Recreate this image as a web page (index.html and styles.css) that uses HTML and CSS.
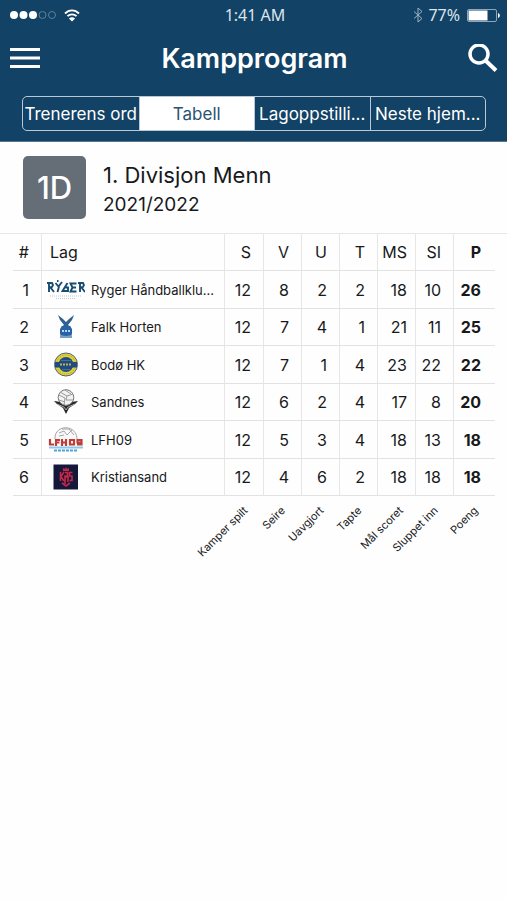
FILE: index.html
```html
<!DOCTYPE html>
<html lang="no">
<head>
<meta charset="utf-8">
<meta name="viewport" content="width=device-width, initial-scale=1">
<title>Kampprogram</title>
<link rel="stylesheet" href="styles.css">
</head>
<body>
<header class="top">
  <div class="status">
    <div class="status-side">
      <svg width="46" height="10" viewBox="0 0 46 10" aria-hidden="true"><g fill="#fff"><circle cx="4" cy="5" r="4"/><circle cx="13.500" cy="5" r="4"/><circle cx="23" cy="5" r="4"/></g><g fill="none" stroke="#5f8099"><circle cx="32.500" cy="5" r="3.500"/><circle cx="42" cy="5" r="3.500"/></g></svg>
      <svg class="wifi" width="16" height="13" viewBox="0 0 16 13" aria-hidden="true"><path d="M1 4.500C5 .4 11 .4 15 4.500M3.400 7.200C6 4.700 10 4.700 12.600 7.200" fill="none" stroke="#fff" stroke-width="1.800"/><path d="M4.900 9.500C6.700 7.900 9.300 7.900 11.100 9.500L8 12.500Z" fill="#fff"/></svg>
    </div>
    <span>1:41 AM</span>
    <div class="status-side status-right">
      <svg width="10" height="16" viewBox="0 0 10 16" aria-hidden="true"><path d="M1 4.500 9 11.500 5 15V1L9 4.500 1 11.500" fill="none" stroke="#9bb0c1"/></svg>
      <span>77%</span>
      <svg class="battery" width="33" height="13" viewBox="0 0 33 13" aria-hidden="true"><rect x=".5" y=".5" width="29" height="12" rx="1.500" fill="none" stroke="#8fa7ba"/><path d="M1.500 1.500H20.500V11.500H1.500Z" fill="#fff"/><path d="M31 4C33.400 5 33.400 8 31 9Z" fill="#fff"/></svg>
    </div>
  </div>
  <div class="bar">
    <button class="icon-button" type="button" aria-label="Meny"><svg width="30" height="22" viewBox="0 0 30 22"><path d="M0 1.500H30M0 10H30M0 18.500H30" stroke="#fff" stroke-width="3"/></svg></button>
    <h1>Kampprogram</h1>
    <button class="icon-button" type="button" aria-label="Søk"><svg width="30" height="30" viewBox="0 0 30 30"><circle cx="11" cy="10" r="9" fill="none" stroke="#fff" stroke-width="3.500"/><path d="M17 16 28 26.500" stroke="#fff" stroke-width="4"/></svg></button>
  </div>
  <nav class="tabs">
    <button type="button">Trenerens ord</button>
    <button type="button" class="active" aria-current="page">Tabell</button>
    <button type="button">Lagoppstilli...</button>
    <button type="button">Neste hjem...</button>
  </nav>
</header>
<main>
  <section class="division">
    <div class="badge">1D</div>
    <div class="division-text">
      <h2>1. Divisjon Menn</h2>
      <p>2021/2022</p>
    </div>
  </section>
  <div class="standings">
  <table>
    <colgroup><col class="rank"><col><col class="played"><col class="num"><col class="num"><col class="num"><col class="num"><col class="num"><col class="points"></colgroup>
    <thead>
      <tr><th>#</th><th>Lag</th><th>S</th><th>V</th><th>U</th><th>T</th><th>MS</th><th>SI</th><th>P</th></tr>
    </thead>
    <tbody>
      <tr><td>1</td><td><div class="team"><svg width="38" height="20" viewBox="0 0 38 20" aria-hidden="true"><g fill="none" stroke="#174c73" stroke-width="1.900"><path d="M0 3H5L6 5 5 7 2 7.500M2 3V12M3.500 7.500 7 12M8.500 3 11.500 6.500 15 2M12 6.500 10.500 12M20.500 3 15.500 11H21V7.500H18.500M29.500 3.500H23.500L25.500 7.500 23.500 11.500H29.500M25 7.500H29M31 3H36L37 5 36 7 33 7.500M33 3V12M34.500 7.500 38 12"/><path d="M10 1H11.500"/></g><path d="M3 16H35M9 18.500H29" stroke="#c3ccd3" stroke-dasharray="1 1"/></svg><span>Ryger Håndballklu...</span></div></td><td>12</td><td>8</td><td>2</td><td>2</td><td>18</td><td>10</td><td>26</td></tr>
      <tr><td>2</td><td><div class="team"><svg width="38" height="26" viewBox="0 0 38 26" aria-hidden="true"><path d="M11 1 16 5 19 8 22 5 27 1 25 6 21 11 24 13 20 14H17L14 13 17 11 13 6Z" fill="#315f91"/><path d="M15 12H23L25 15V20L23 23H15L13 20V15Z" fill="#2762a8"/><path d="M13 21 19 22 25 21V24H13Z" fill="#799fc9"/><path d="M15 17H23" stroke="#c3d7eb" stroke-width="2" stroke-dasharray="2 1"/></svg><span>Falk Horten</span></div></td><td>12</td><td>7</td><td>4</td><td>1</td><td>21</td><td>11</td><td>25</td></tr>
      <tr><td>3</td><td><div class="team"><svg width="38" height="26" viewBox="0 0 38 26" aria-hidden="true"><circle cx="19" cy="12.500" r="11.500" fill="#e2d336" stroke="#526282"/><circle cx="19" cy="12.500" r="9.500" fill="none" stroke="#a89c3e" stroke-dasharray="1 1"/><circle cx="19" cy="12.500" r="7.500" fill="#1d4b86"/><path d="M8 10H30V15.500H8Z" fill="#214b80"/><path d="M13 12.500H25" stroke="#b5b35a" stroke-width="2" stroke-dasharray="2 1"/><path d="M14 8.500H24M15 17.500H23" stroke="#526e83"/></svg><span>Bodø HK</span></div></td><td>12</td><td>7</td><td>1</td><td>4</td><td>23</td><td>22</td><td>22</td></tr>
      <tr><td>4</td><td><div class="team"><svg width="38" height="26" viewBox="0 0 38 26" aria-hidden="true"><path d="M7 12 14 13 19 17 24 13 31 12 28 15 22 19 19 25 16 19 10 15Z" fill="#252729"/><circle cx="19" cy="8.500" r="7.800" fill="#f3f3f3" stroke="#777"/><path d="M12 6 18 9 17 16M13 3 20 7 26 5M20 7 19 11 26 11M18 1 24 5M12 11 18 13" fill="none" stroke="#999"/><path d="M10 15 17 18 19 21 21 18 28 15" fill="none" stroke="#aaa"/></svg><span>Sandnes</span></div></td><td>12</td><td>6</td><td>2</td><td>4</td><td>17</td><td>8</td><td>20</td></tr>
      <tr><td>5</td><td><div class="team"><svg width="38" height="26" viewBox="0 0 38 26" aria-hidden="true"><path d="M8 12C7-3 30-3 30 12M12 6 17 4 20 8 25 3M15 2 22 2 27 8M12 9 17 8" fill="#f8f8f8" stroke="#a2a7ab"/><g fill="none" stroke="#bd3e39" stroke-width="2.200"><path d="M3 12V17.500H7M9 19V13H13M9 15.500H12.500M15 12V19M19 12V19M15 15.500H19M23 13H27V17.500H23ZM34.500 15.500H30.500V13H34.500V17.500H30"/></g><path d="M2 20.500H36" stroke="#8cc8ea" stroke-width="2"/><path d="M7 23.500H31" stroke="#4aa4dd" stroke-width="2" stroke-dasharray="3 1"/></svg><span>LFH09</span></div></td><td>12</td><td>5</td><td>3</td><td>4</td><td>18</td><td>13</td><td>18</td></tr>
      <tr><td>6</td><td><div class="team"><svg width="38" height="26" viewBox="0 0 38 26" aria-hidden="true"><path d="M6.500 .5H31V25.500H6.500Z" fill="#15183a"/><g fill="none" stroke="#c62746" stroke-width="1.600"><path d="M13.500 8V17M17 8 14 12.500 17 17M18 8.500H20.500V12H18V20M18 13H21V18M25.500 8.500H22.500V12H25V16.500H22.500"/><path d="M15 19 19 22 23 19"/></g><path d="M16 4 18 5 19 3 20 5 22 4V7H16Z" fill="#c62746"/></svg><span>Kristiansand</span></div></td><td>12</td><td>4</td><td>6</td><td>2</td><td>18</td><td>18</td><td>18</td></tr>
    </tbody>
    <tfoot>
      <tr><td></td><td></td><td><div class="slanted"><span>Kamper spilt</span></div></td><td><div class="slanted"><span>Seire</span></div></td><td><div class="slanted"><span>Uavgjort</span></div></td><td><div class="slanted"><span>Tapte</span></div></td><td><div class="slanted"><span>Mål scoret</span></div></td><td><div class="slanted"><span>Sluppet inn</span></div></td><td><div class="slanted"><span>Poeng</span></div></td></tr>
    </tfoot>
  </table>
  </div>
</main>
</body>
</html>
```
FILE: styles.css
```css
* { box-sizing: border-box; }
body {
  margin: 0;
  background: #fefefe;
  color: #18191b;
  font-family: Inter, "Liberation Sans", sans-serif;
}
button { font: inherit; color: inherit; background: none; border: 0; padding: 0; }
svg { display: block; flex: none; }
h1, h2, p { margin: 0; }

.top {
  background: #124265;
  color: #fff;
  padding-bottom: 10px;
  border-bottom: 1px solid #58778f;
}
.status {
  display: grid;
  grid-template-columns: 1fr auto 1fr;
  align-items: center;
  height: 30px;
  padding: 0 7px 0 10px;
  color: #dce5ec;
  font: 16px "Noto Sans", sans-serif;
}
.status-side { display: flex; align-items: center; }
.status-right { justify-content: flex-end; gap: 5px; }
.wifi { margin-left: 8px; }
.battery { margin-left: 2px; }
.bar {
  display: flex;
  align-items: center;
  justify-content: space-between;
  height: 57px;
  padding: 0 8px 0 10px;
}
h1 { font-size: 27px; line-height: 32px; font-weight: 600; }
.icon-button { width: 31px; }
.tabs {
  display: grid;
  grid-template-columns: repeat(4, 1fr);
  height: 35px;
  margin: 9px 21px 0 22px;
  border: 1px solid #b8c8d4;
  border-radius: 5px;
  overflow: hidden;
  font-size: 17px;
}
.tabs button { white-space: nowrap; min-width: 0; }
.tabs button + button { border-left: 1px solid #b8c8d4; }
.tabs .active { background: #fff; color: #285374; }

.division {
  display: flex;
  align-items: center;
  gap: 17px;
  padding: 14px 23px;
  border-bottom: 1px solid #e6e6e6;
}
.division-text { padding-top: 2px; }
.badge {
  display: grid;
  place-items: center;
  width: 63px;
  height: 63px;
  border-radius: 5px;
  background: #656d77;
  color: #fff;
  font-size: 31px;
  font-weight: 500;
}
h2 { font-size: 22px; line-height: 32px; font-weight: 400; }
.division p { font-size: 19px; line-height: 28px; }

.standings { padding: 0 12px 0 13px; }
table {
  width: 100%;
  table-layout: fixed;
  border-collapse: separate;
  border-spacing: 0;
  font-size: 16px;
}
.rank { width: 28px; }
.played { width: 39px; }
.num { width: 38px; }
.points { width: 42px; }
th, td {
  height: 37px;
  padding: 0 12px 0 0;
  border-bottom: 1px solid #e2e2e2;
  text-align: right;
  font-weight: 400;
}
tbody tr:nth-child(odd) td { height: 38px; }
th + th, tbody td + td { border-left: 1px solid #e6e6e6; }
th:nth-child(2), td:nth-child(2) { text-align: left; padding: 0 0 0 5px; }
th:nth-child(2) { padding-left: 8px; }
th:nth-child(7), td:nth-child(7) { padding-right: 8px; }
th:last-child, td:last-child { font-weight: 700; padding-right: 14px; }
.team {
  display: flex;
  align-items: center;
  gap: 6px;
  font-size: 13px;
  white-space: nowrap;
}
tfoot td { height: 70px; border: 0; vertical-align: top; }
.slanted {
  display: flex;
  justify-content: flex-end;
  padding-top: 2px;
  font-size: 11px;
  line-height: 16px;
  font-weight: 400;
}
.slanted span {
  flex: none;
  white-space: nowrap;
  transform: rotate(-45deg);
  transform-origin: bottom right;
}
```
